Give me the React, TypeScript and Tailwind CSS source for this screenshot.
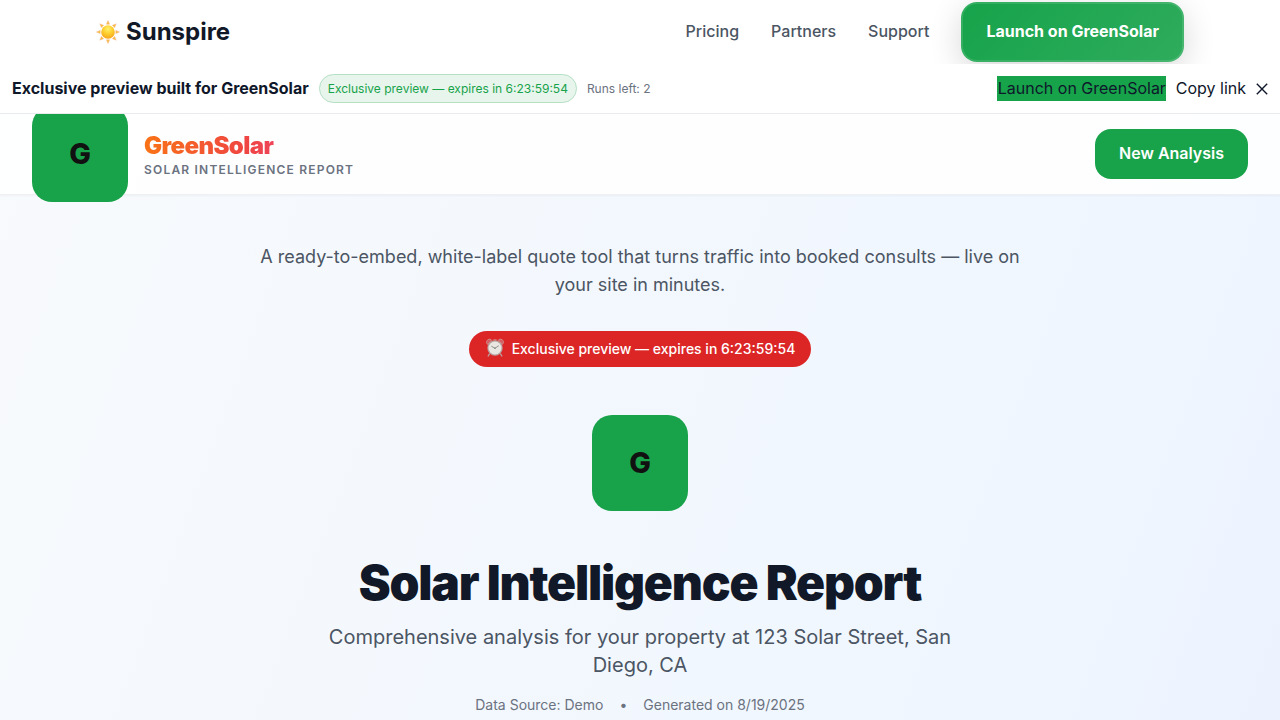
function Sun() {
  const angles = [0, 45, 90, 135, 180, 225, 270, 315];
  return (
    <svg className="h-6 w-6 shrink-0" viewBox="0 0 24 24" aria-hidden="true">
      <defs>
        <radialGradient id="sunFill" cx="50%" cy="28%" r="75%">
          <stop offset="0" stopColor="#fff06a" />
          <stop offset="0.5" stopColor="#fdcd2c" />
          <stop offset="1" stopColor="#f6a01b" />
        </radialGradient>
      </defs>
      {angles.map((a) => (
        <path
          key={a}
          d="M12 .5 13.6 4.2 10.4 4.2Z"
          fill="#fbbd3c"
          stroke="#f5b98c"
          strokeWidth=".5"
          strokeLinejoin="round"
          transform={`rotate(${a} 12 12)`}
        />
      ))}
      <circle cx="12" cy="12" r="6.8" fill="url(#sunFill)" />
    </svg>
  );
}

function AlarmClock() {
  return (
    <svg className="-mt-0.5 h-5 w-5 shrink-0" viewBox="0 0 20 20" aria-hidden="true">
      <path d="M4.4 16 3.2 18M15.6 16l1.2 2" stroke="#b9a0a0" strokeWidth="1.4" strokeLinecap="round" />
      <path d="M1.8 5.4A3 3 0 0 1 6.6 2L2.6 6.4ZM18.2 5.4A3 3 0 0 0 13.4 2l4 4.4Z" fill="#d95a5a" stroke="#c99a9a" strokeWidth=".8" />
      <path d="M8.4 1.8h3.2" stroke="#d08e8e" strokeWidth="1" />
      <circle cx="10" cy="10" r="7.7" fill="#b8a09d" />
      <circle cx="10" cy="10" r="6.5" fill="#e9e6e2" />
      <path d="m6.3 8.2 3.7 2 3.8-2.5" fill="none" stroke="#7c7c7a" strokeWidth=".8" />
      <circle cx="10" cy="10.2" r=".7" fill="#777" />
    </svg>
  );
}

function LogoTile() {
  return (
    <div className="flex h-24 w-24 shrink-0 items-center justify-center rounded-[20px] bg-[#18a34a] text-[28.8px] font-extrabold text-[#111111]">
      G
    </div>
  );
}

function TopNav() {
  return (
    <header className="relative z-10 flex h-16 shrink-0 items-center justify-between overflow-hidden bg-white px-24">
      <div className="flex items-center gap-1.5">
        <Sun />
        <span className="text-2xl font-bold text-[#111827]">Sunspire</span>
      </div>
      <nav className="flex items-center gap-8 font-medium text-[#4b5563]">
        <a className="pb-0.5">Pricing</a>
        <a className="pb-0.5">Partners</a>
        <a className="pb-0.5">Support</a>
        <button className="h-[60px] rounded-2xl border-2 border-white/12 bg-[linear-gradient(135deg,#16a34a,#2fac5d)] bg-origin-border px-[23px] pb-0.5 font-bold text-white shadow-[0_8px_32px_rgba(0,0,0,0.16)]">
          Launch on GreenSolar
        </button>
      </nav>
    </header>
  );
}

function PreviewBar() {
  return (
    <div className="relative z-10 flex h-[50px] shrink-0 items-center justify-between border-b border-[#e9ebee] bg-white px-3">
      <div className="flex items-center gap-2.5">
        <span className="pb-0.5 font-bold">Exclusive preview built for GreenSolar</span>
        <span className="flex h-[29px] items-center rounded-full border border-[#b5e0c4] bg-[#e8f5ed] px-2 text-xs text-[#16a34a]">
          Exclusive preview — expires in 6:23:59:54
        </span>
        <span className="text-xs text-[#6b7280]">Runs left: 2</span>
      </div>
      <div className="flex items-center gap-2.5">
        <span className="w-[169px] bg-[#16a34a] pl-px leading-[25px] whitespace-nowrap">Launch on GreenSolar</span>
        <span className="pb-0.5">Copy link</span>
        <svg className="h-3 w-3" viewBox="0 0 12 12" role="img" aria-label="Close">
          <path d="M.8.8 11.2 11.2M11.2.8.8 11.2" stroke="#0f172a" strokeWidth="1.4" />
        </svg>
      </div>
    </div>
  );
}

function ReportHeader() {
  return (
    <div className="flex h-[81px] shrink-0 items-center justify-between border-b border-[#eef0f4] bg-white/90 px-8 shadow-[0_1px_2px_rgba(0,0,0,0.04)]">
      <div className="flex items-center gap-4">
        <LogoTile />
        <div>
          <div className="bg-[linear-gradient(to_right,#f97316,#ef4444,#ec4899)] bg-clip-text text-2xl font-black tracking-[-0.025em] text-transparent [background-size:209px_100%]">
            GreenSolar
          </div>
          <div className="text-xs font-semibold tracking-widest text-[#6b7280]">SOLAR INTELLIGENCE REPORT</div>
        </div>
      </div>
      <button className="h-[50px] rounded-2xl bg-[#18a34a] px-6 pb-0.5 font-semibold text-white">New Analysis</button>
    </div>
  );
}

export default function App() {
  return (
    <div className="flex h-[720px] w-full flex-col overflow-hidden bg-[linear-gradient(to_bottom_right,#f8fafc,#eff6ff,#e0e7ff)] bg-[length:100%_3500px] font-['Inter','Noto_Sans',sans-serif] text-[#0f172a]">
      <TopNav />
      <PreviewBar />
      <ReportHeader />
      <main className="flex flex-col items-center text-center">
        <p className="mt-12 w-[768px] text-lg leading-7 text-[#4b5563]">
          A ready-to-embed, white-label quote tool that turns traffic into booked consults — live on your site in minutes.
        </p>
        <div className="mt-8 flex h-9 items-center gap-[7px] rounded-full bg-[#dc2626] px-[15.5px] text-sm font-medium text-white">
          <AlarmClock />
          <span>Exclusive preview — expires in 6:23:59:54</span>
        </div>
        <div className="mt-12">
          <LogoTile />
        </div>
        <h1 className="mt-12 text-5xl leading-12 font-black tracking-[-0.025em] text-[#111827]">
          Solar Intelligence Report
        </h1>
        <p className="mt-4 w-[672px] text-xl leading-7 text-[#4b5563]">
          Comprehensive analysis for your property at 123 Solar Street, San Diego, CA
        </p>
        <div className="mt-4 flex items-center gap-4 text-sm text-[#6b7280]">
          <span>Data Source: Demo</span>
          <span>•</span>
          <span>Generated on 8/19/2025</span>
        </div>
      </main>
    </div>
  );
}
